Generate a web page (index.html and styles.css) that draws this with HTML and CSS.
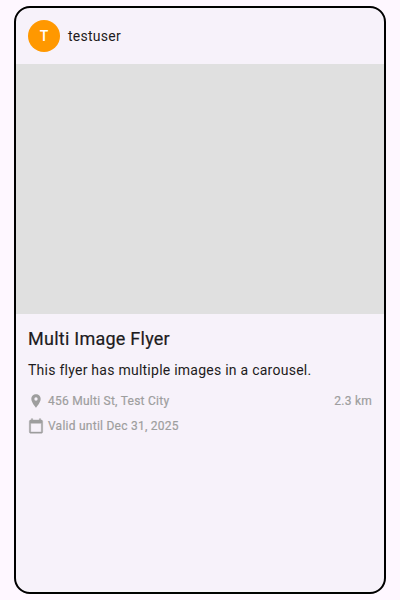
FILE: index.html
```html
<!DOCTYPE html>
<html lang="en">
<head>
<meta charset="utf-8">
<title>Multi Image Flyer</title>
<link rel="stylesheet" href="styles.css">
</head>
<body>
<article class="card">
  <header class="user"><span class="avatar">T</span><span class="username">testuser</span></header>
  <div class="image"></div>
  <div class="content">
    <h1 class="title">Multi Image Flyer</h1>
    <p class="description">This flyer has multiple images in a carousel.</p>
    <div class="meta">
      <svg class="icon" viewBox="0 0 24 24"><path d="M12 2C8.13 2 5 5.13 5 9c0 5.25 7 13 7 13s7-7.75 7-13c0-3.87-3.13-7-7-7zm0 9.5a2.5 2.5 0 0 1 0-5 2.5 2.5 0 0 1 0 5z"/></svg>
      <span>456 Multi St, Test City</span><span class="distance">2.3 km</span>
    </div>
    <div class="meta">
      <svg class="icon calendar" viewBox="0 0 24 24"><path d="M20 3h-1V1h-2v2H7V1H5v2H4c-1.1 0-2 .9-2 2v16c0 1.1.9 2 2 2h16c1.1 0 2-.9 2-2V5c0-1.1-.9-2-2-2zm0 18H4V8h16v13z"/></svg>
      <span>Valid until Dec 31, 2025</span>
    </div>
  </div>
</article>
</body>
</html>
```
FILE: styles.css
```css
* { box-sizing: border-box; }
body {
  margin: 0;
  height: 600px;
  padding: 6px 14px;
  background: #fef7ff;
  color: #1d1b20;
  font-family: Roboto, sans-serif;
}
.card {
  height: 588px;
  border: 2px solid #000;
  border-radius: 16px;
  background: #f7f2fa;
  overflow: hidden;
}
.user {
  height: 56px;
  padding: 0 12px;
  display: flex;
  align-items: center;
  gap: 8px;
}
.avatar {
  width: 32px;
  height: 32px;
  border-radius: 50%;
  background: #ff9800;
  color: #fff;
  font-size: 14px;
  font-weight: 500;
  line-height: 32px;
  text-align: center;
}
.username {
  font-size: 14px;
  letter-spacing: 0.25px;
}
.image { height: 250px; background: #e0e0e0; }
.content { padding: 12px; }
.title {
  margin: 0 0 8px;
  font-size: 18px;
  font-weight: 400;
  line-height: 26px;
  letter-spacing: 0.25px;
  -webkit-text-stroke: 0.2px currentColor;
}
.description {
  margin: 0 0 12px;
  font-size: 14px;
  line-height: 20px;
  letter-spacing: 0.25px;
}
.meta {
  height: 17px;
  margin-bottom: 8px;
  display: flex;
  align-items: center;
  gap: 4px;
  font-size: 12px;
  letter-spacing: 0.25px;
  color: #9e9e9e;
  -webkit-text-stroke: 0.2px currentColor;
}
.icon { width: 16px; height: 16px; fill: #9e9e9e; }
.calendar { stroke: #9e9e9e; stroke-width: 0.6; }
.distance { margin-left: auto; }
```
